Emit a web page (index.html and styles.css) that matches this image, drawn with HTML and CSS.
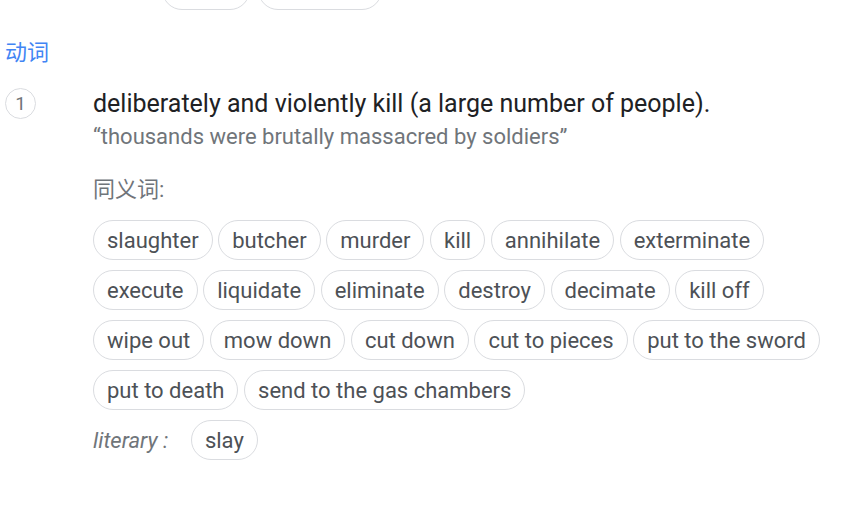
FILE: index.html
```html
<!DOCTYPE html>
<html lang="zh">
<head>
<meta charset="utf-8">
<link rel="stylesheet" href="styles.css">
</head>
<body>
<div class="prev-chips">
  <span class="chip chip-a"></span>
  <span class="chip chip-b"></span>
</div>
<div class="pos">动词</div>
<div class="sense">
  <div class="num">1</div>
  <div class="body">
    <div class="def">deliberately and violently kill (a large number of people).</div>
    <div class="example">“thousands were brutally massacred by soldiers”</div>
    <div class="syn-label">同义词:</div>
    <div class="chips">
      <span class="chip">slaughter</span>
      <span class="chip">butcher</span>
      <span class="chip">murder</span>
      <span class="chip">kill</span>
      <span class="chip">annihilate</span>
      <span class="chip">exterminate</span>
      <span class="chip">execute</span>
      <span class="chip">liquidate</span>
      <span class="chip">eliminate</span>
      <span class="chip">destroy</span>
      <span class="chip">decimate</span>
      <span class="chip">kill off</span>
      <span class="chip">wipe out</span>
      <span class="chip">mow down</span>
      <span class="chip">cut down</span>
      <span class="chip">cut to pieces</span>
      <span class="chip">put to the sword</span>
      <span class="chip">put to death</span>
      <span class="chip">send to the gas chambers</span>
    </div>
    <div class="chips register">
      <span class="reg-label">literary :</span>
      <span class="chip">slay</span>
    </div>
  </div>
</div>
</body>
</html>
```
FILE: styles.css
```css
html, body {
  margin: 0;
  padding: 0;
  background: #fff;
}
body {
  font-family: Roboto, "Noto Sans CJK SC", sans-serif;
  color: #202124;
  width: 860px;
  height: 505px;
  overflow: hidden;
}
.prev-chips {
  display: flex;
  gap: 8px;
  padding-left: 162px;
  margin-top: -30px;
  height: 40px;
}
.chip {
  display: inline-flex;
  align-items: center;
  box-sizing: border-box;
  height: 40px;
  padding: 0 13px;
  border: 1px solid #dadce0;
  border-radius: 20px;
  font-size: 22px;
  color: #4d5156;
  white-space: nowrap;
}
.chip-a { width: 88px; }
.chip-b { width: 124px; }
.pos {
  margin-top: 28px;
  padding-left: 5px;
  font-size: 22px;
  line-height: 30px;
  color: #4285f4;
}
.sense {
  display: flex;
  margin-top: 20px;
}
.num {
  flex: none;
  box-sizing: border-box;
  width: 31px;
  height: 31px;
  margin-left: 5px;
  border: 1px solid #dadce0;
  border-radius: 50%;
  display: flex;
  align-items: center;
  justify-content: center;
  font-size: 19px;
  color: #70757a;
}
.body {
  margin-left: 57px;
}
.def {
  font-size: 25px;
  line-height: 32px;
  color: #202124;
}
.example {
  margin-top: 2px;
  font-size: 22px;
  line-height: 30px;
  color: #70757a;
}
.syn-label {
  margin-top: 23px;
  font-size: 22px;
  line-height: 30px;
  color: #70757a;
}
.chips {
  display: flex;
  flex-wrap: wrap;
  gap: 10px 5.6px;
  margin-top: 15px;
  width: 750px;
}
.register {
  margin-top: 10px;
  align-items: center;
}
.reg-label {
  font-style: italic;
  font-size: 22px;
  color: #70757a;
  margin-right: 17px;
}
```
